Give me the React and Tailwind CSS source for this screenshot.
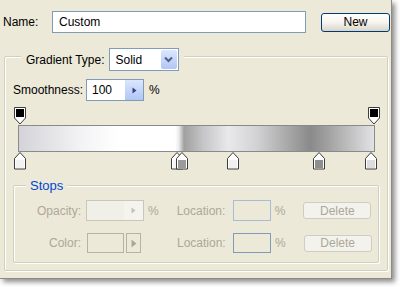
import React from "react";

const OpacityStop = ({ left }) => (
  <svg
    className="absolute top-0"
    style={{ left }}
    width="12"
    height="18"
    viewBox="0 0 12 18"
  >
    <path
      d="M0.5 0.5 H11.5 V11 L6 17 L0.5 11 Z"
      fill="#ffffff"
      stroke="#3c3c3c"
    />
    <rect x="2" y="2" width="8" height="8" fill="#000000" />
  </svg>
);

const ColorStop = ({ left, color }) => (
  <svg
    className="absolute top-[45px]"
    style={{ left }}
    width="12"
    height="18"
    viewBox="0 0 12 18"
  >
    <path
      d="M6 0.5 L11.5 6.5 V17 H0.5 V6.5 Z"
      fill="#ffffff"
      stroke="#3c3c3c"
    />
    <rect x="2" y="8" width="8" height="8" fill={color} />
  </svg>
);

const colorStops = [
  { left: 0, color: "#f2f2f2" },
  { left: 157, color: "#f4f4f4" },
  { left: 162, color: "#9a9a9a" },
  { left: 213, color: "#f0f0f0" },
  { left: 299, color: "#8e8e8e" },
  { left: 351, color: "#dcdcdc" },
];

const BlueButton = ({ children, className }) => (
  <div
    className={`flex items-center justify-center bg-gradient-to-b from-[#dce6fd] to-[#b1c6f5] ${className}`}
  >
    {children}
  </div>
);

export default function App() {
  return (
    <div className="w-[400px] h-[287px] bg-white overflow-hidden font-['Liberation_Sans',Arial,sans-serif] text-[12px] text-black">
      <div className="w-[392px] h-[279px] bg-[#ece9d8] border-r border-b border-[#8d8b80] shadow-[3px_3px_5px_rgba(0,0,0,0.45)]">
        {/* name row */}
        <div className="flex items-center pt-[11px] h-[33px]">
          <span className="ml-[3px] w-[49px]">Name:</span>
          <div className="w-[254px] h-[22px] border border-[#7f9db9] bg-white flex items-center pl-[6px]">
            Custom
          </div>
          <button className="ml-[15px] w-[69px] h-[19px] border border-[#003c74] rounded-[3px] bg-gradient-to-b from-white via-[#f5f4ee] to-[#d9d5c8] flex items-center justify-center leading-none">
            New
          </button>
        </div>

        {/* gradient group */}
        <div className="mt-[23px] ml-[4px] w-[384px] h-[215px] border border-[#d0d0bf] shadow-[inset_1px_1px_0_#ffffff,1px_1px_0_#ffffff] rounded-[2px]">
          <div className="flex items-center -mt-[9px] ml-[16px] w-fit px-[5px] bg-[#ece9d8]">
            <span>Gradient Type:</span>
            <div className="ml-[4px] w-[70px] h-[23px] border border-[#7f9db9] bg-white flex items-center">
              <span className="flex-1 pl-[6px]">Solid</span>
              <BlueButton className="w-[16px] h-[19px] mr-[1px] rounded-[2px]">
                <svg width="9" height="7" viewBox="0 0 9 7">
                  <path
                    d="M1 1.5 L4.5 5 L8 1.5"
                    fill="none"
                    stroke="#4d6185"
                    strokeWidth="2"
                  />
                </svg>
              </BlueButton>
            </div>
          </div>

          <div className="flex items-center mt-[8px] ml-[8px] h-[22px]">
            <span className="w-[73px]">Smoothness:</span>
            <div className="w-[58px] h-[22px] border border-[#7f9db9] bg-white flex items-center">
              <span className="flex-1 pl-[5px]">100</span>
              <BlueButton className="w-[18px] h-[20px]">
                <svg width="5" height="7" viewBox="0 0 5 7">
                  <path d="M0.5 0.5 L4.5 3.5 L0.5 6.5 Z" fill="#2c4487" />
                </svg>
              </BlueButton>
            </div>
            <span className="ml-[5px]">%</span>
          </div>

          {/* gradient slider */}
          <div className="relative ml-[9px] mt-[6px] w-[366px] h-[63px]">
            <OpacityStop left={0} />
            <OpacityStop left={354} />
            <div className="absolute left-[4px] top-[18px] w-[357px] h-[27px] border border-[#8a8a8a] bg-[linear-gradient(to_right,#d4d4d8_0%,#f2f2f4_17%,#ffffff_28%,#ffffff_44%,#ececec_45%,#a0a0a0_46.5%,#c6c6c8_52%,#e9e9eb_59%,#d2d2d4_67%,#8a8a8a_82%,#9c9c9c_86%,#e2e2e4_100%)]" />
            {colorStops.map((s, i) => (
              <ColorStop key={i} left={s.left} color={s.color} />
            ))}
          </div>

          {/* stops group */}
          <div className="mt-[15px] ml-[8px] w-[366px] h-[78px] border border-[#d0d0bf] shadow-[inset_1px_1px_0_#ffffff,1px_1px_0_#ffffff] rounded-[2px] text-[#aca899]">
            <div className="-mt-[8px] ml-[12px] w-fit px-[4px] h-[15px] bg-[#ece9d8] text-[#0046d5] text-[13px] leading-[15px]">
              Stops
            </div>

            <div className="flex items-center mt-[7px] h-[21px]">
              <span className="w-[67px] text-right">Opacity:</span>
              <div className="ml-[5px] w-[58px] h-[21px] border border-[#c9c7ba] bg-[#f0efe8] flex">
                <div className="flex-1" />
                <div className="w-[19px] h-full bg-[#f4f3ee] flex items-center justify-center">
                  <svg width="5" height="7" viewBox="0 0 5 7">
                    <path d="M0.5 0.5 L4.5 3.5 L0.5 6.5 Z" fill="#c4c2b6" />
                  </svg>
                </div>
              </div>
              <span className="ml-[4px]">%</span>
              <span className="ml-[18px] w-[52px]">Location:</span>
              <div className="ml-[4px] w-[38px] h-[21px] border border-[#a5bcd4] bg-[#ece9d8]" />
              <span className="ml-[4px]">%</span>
              <div className="ml-[18px] w-[68px] h-[17px] border border-[#cfcdc0] rounded-[3px] bg-[#f3f2ec] flex items-center justify-center">
                Delete
              </div>
            </div>

            <div className="flex items-center mt-[12px] h-[20px]">
              <span className="w-[67px] text-right">Color:</span>
              <div className="ml-[6px] w-[37px] h-[20px] border border-[#b5b3a6] bg-[#ece9d8]" />
              <div className="ml-[2px] w-[15px] h-[20px] border border-[#b5b3a6] bg-[#ece9d8] flex items-center justify-center">
                <svg width="6" height="9" viewBox="0 0 6 9">
                  <path d="M0.5 0.5 L5.5 4.5 L0.5 8.5 Z" fill="#aca899" />
                </svg>
              </div>
              <span className="ml-[36px] w-[52px]">Location:</span>
              <div className="ml-[4px] w-[38px] h-[20px] border border-[#7f9db9] bg-[#ece9d8]" />
              <span className="ml-[4px]">%</span>
              <div className="ml-[18px] w-[68px] h-[17px] border border-[#cfcdc0] rounded-[3px] bg-[#f3f2ec] flex items-center justify-center">
                Delete
              </div>
            </div>
          </div>
        </div>
      </div>
    </div>
  );
}
